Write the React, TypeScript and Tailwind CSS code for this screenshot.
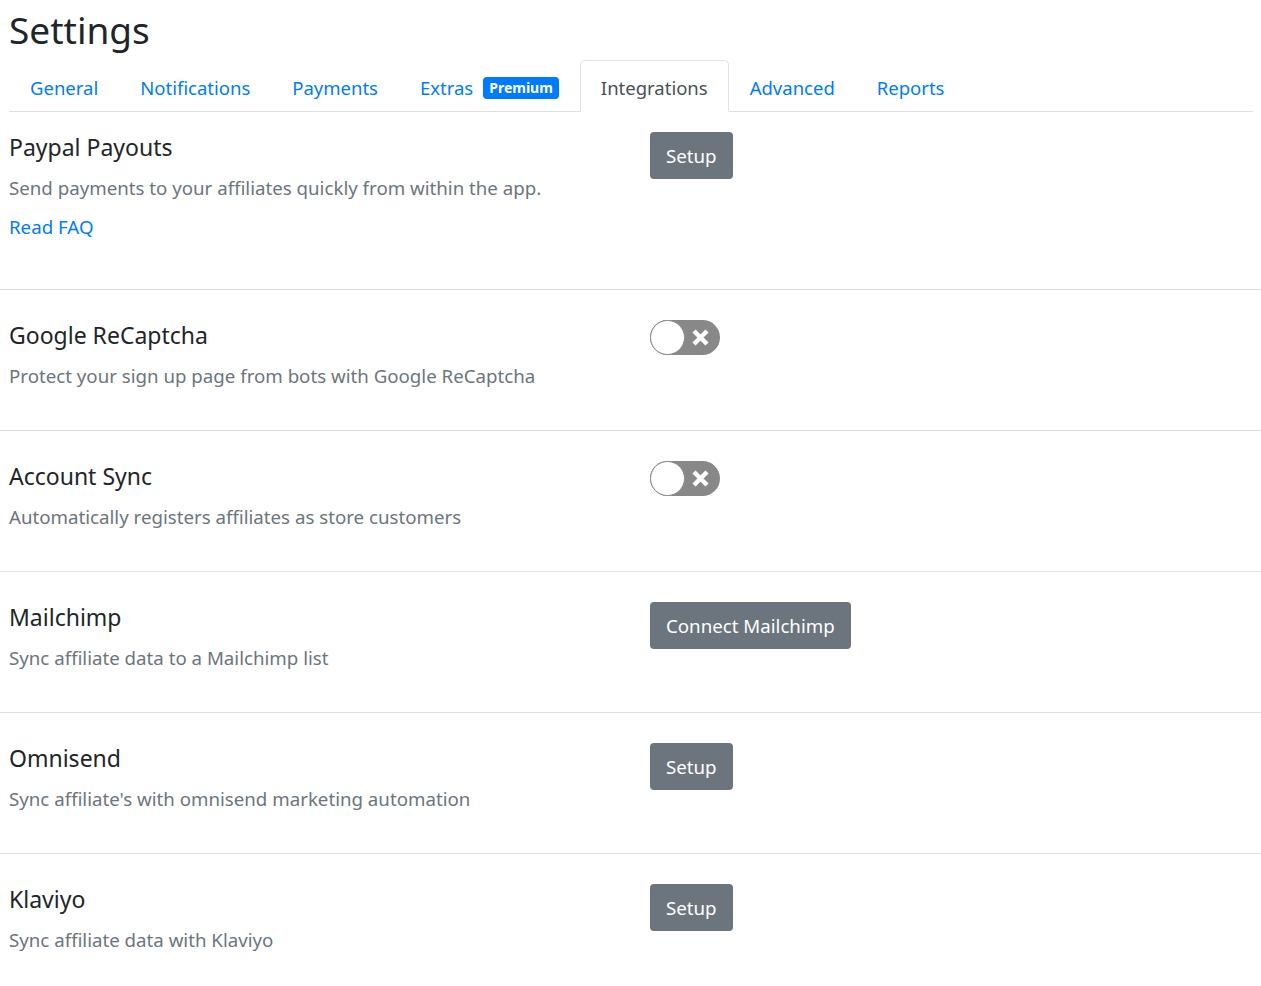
import React from "react";

const Toggle = () => (
  <div className="relative w-[70px] h-[35px] rounded-full bg-[#888888]">
    <div className="absolute left-0 top-0 w-[35px] h-[35px] rounded-full bg-white border border-[#8a8a8a]" />
    <svg className="absolute left-[41px] top-[8px]" width="19" height="19" viewBox="0 0 19 19">
      <path d="M3 3 L16 16 M16 3 L3 16" stroke="white" strokeWidth="4.5" strokeLinecap="butt" />
    </svg>
  </div>
);

const Btn = ({ label }: { label: string }) => (
  <button className="h-[47px] px-[16px] rounded-[4px] bg-[#6c757d] text-white text-[18.7px] leading-[30px]">
    {label}
  </button>
);

type Row = { title: string; desc: string; action: React.ReactNode; faq?: boolean };

const rows: Row[] = [
  { title: "Paypal Payouts", desc: "Send payments to your affiliates quickly from within the app.", action: <Btn label="Setup" />, faq: true },
  { title: "Google ReCaptcha", desc: "Protect your sign up page from bots with Google ReCaptcha", action: <Toggle /> },
  { title: "Account Sync", desc: "Automatically registers affiliates as store customers", action: <Toggle /> },
  { title: "Mailchimp", desc: "Sync affiliate data to a Mailchimp list", action: <Btn label="Connect Mailchimp" /> },
  { title: "Omnisend", desc: "Sync affiliate's with omnisend marketing automation", action: <Btn label="Setup" /> },
  { title: "Klaviyo", desc: "Sync affiliate data with Klaviyo", action: <Btn label="Setup" /> },
];

const tabs = ["General", "Notifications", "Payments", "Extras", "Integrations", "Advanced", "Reports"];

export default function App() {
  return (
    <div className="bg-white min-h-[986px] text-[#212529]" style={{ fontFamily: '"Noto Sans", sans-serif' }}>
      <div className="pl-[9px] pr-[8px]">
        <h1 className="text-[37px] leading-[60px] font-normal">Settings</h1>
        <div className="flex border-b border-[#dee2e6] h-[52px]">
          {tabs.map((t) => {
            const active = t === "Integrations";
            return (
              <div
                key={t}
                className={
                  active
                    ? "flex items-center pt-[4px] px-[20px] -mb-px bg-white border border-[#dee2e6] border-b-white rounded-t-[5px] text-[#495057] text-[18.5px]"
                    : "flex items-center pt-[5px] px-[20px] border border-transparent text-[#007bff] text-[18.5px]"
                }
              >
                {t}
                {t === "Extras" && (
                  <span className="ml-[10px] bg-[#007bff] text-white text-[14px] font-bold leading-[22px] px-[6px] rounded-[4px]">
                    Premium
                  </span>
                )}
              </div>
            );
          })}
        </div>
      </div>
      {rows.map((r, i) => (
        <div key={r.title} className={i === 0 ? "" : "border-t border-[#e0e0e0]"}>
          <div className={"flex pl-[9px] " + (i === 0 ? "pt-[20px] h-[177px]" : "pt-[30px] h-[140px]")}>
            <div className="w-[641px]">
              <div className="text-[23px] leading-[30px]">{r.title}</div>
              <div className="mt-[11px] text-[18.7px] leading-[30px] text-[#6c757d]">{r.desc}</div>
              {r.faq && <div className="mt-[9px] text-[18.7px] leading-[30px] text-[#007bff]">Read FAQ</div>}
            </div>
            <div>{r.action}</div>
          </div>
        </div>
      ))}
    </div>
  );
}
